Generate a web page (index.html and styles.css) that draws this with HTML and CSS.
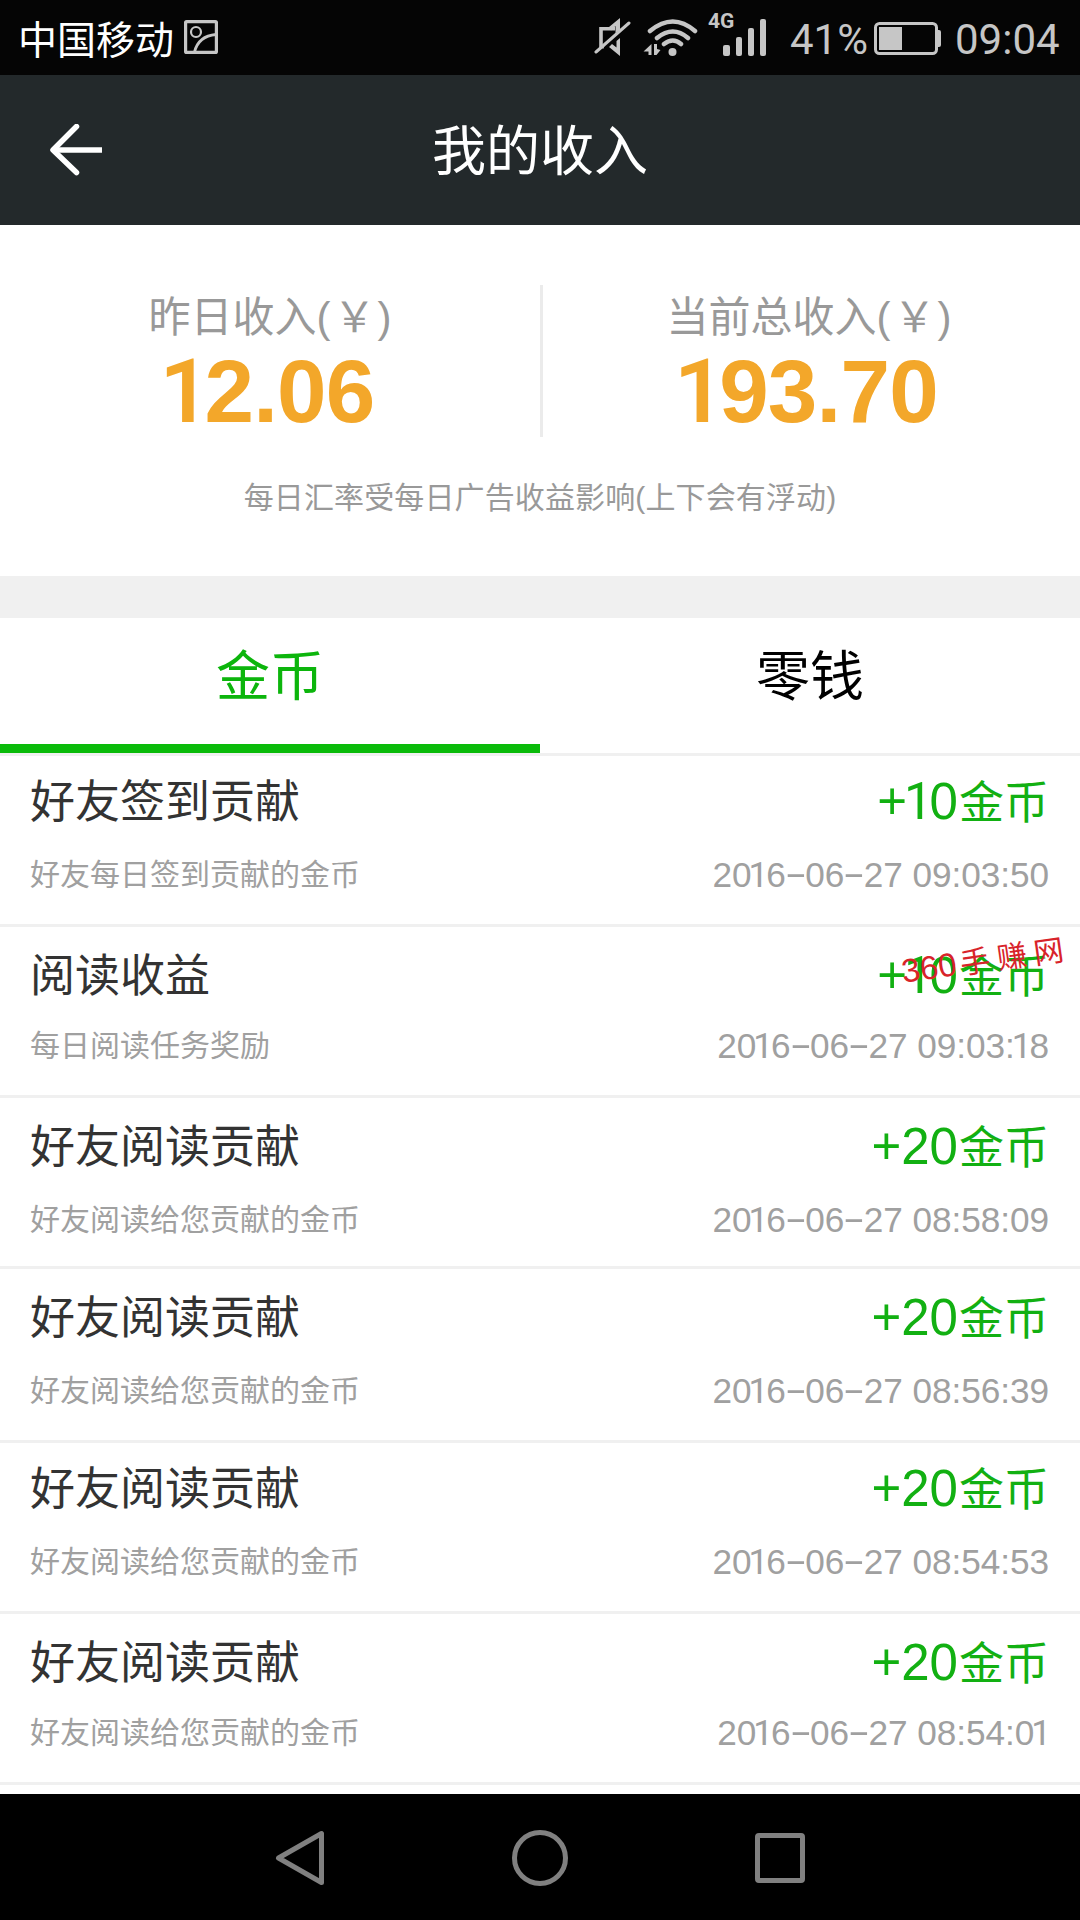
FILE: index.html
```html
<!DOCTYPE html>
<html lang="zh-CN">
<head>
<meta charset="utf-8">
<title>我的收入</title>
<link rel="stylesheet" href="styles.css">
</head>
<body>
<div class="screen">
  <div class="status">
    <span class="carrier">中国移动</span>
    <svg class="pic" width="34" height="34" viewBox="0 0 34 34" fill="none" stroke="#c6c6c6"><rect x="1.6" y="1.6" width="30.8" height="30.8" rx="1" stroke-width="3.2"/><circle cx="12" cy="12" r="5" stroke-width="2.2"/><path d="M10.500 32C13 22 20 15.500 32 14.500" stroke-width="2.8"/></svg>
    <svg class="mute" width="38" height="40" viewBox="0 0 38 40" fill="none" stroke="#c6c6c6"><path d="M22 10.800H8V28L11 29" stroke-width="3.600"/><path d="M16 9L27 0V12L22.500 15V8L18 12.500Z" fill="#c6c6c6" stroke="none"/><path d="M27 20V38L16 29L19 26L23.500 29.500V23Z" fill="#c6c6c6" stroke="none"/><path d="M3 34L36 5" stroke-width="3" stroke-linecap="round"/></svg>
    <svg class="wifi" width="56" height="38" viewBox="0 0 56 38" fill="none" stroke="#c6c6c6" stroke-width="4.500" stroke-linecap="round"><path d="M7 12Q30-7 52 12M14 19Q30 6 45 19M21 25Q30 18 38 25"/><g fill="#c6c6c6" stroke="none"><circle cx="29.500" cy="33" r="4"/><path d="M8.500 25V36H5.500V32.500H0.500ZM11 25V36H13.500L17.500 31L14 30V25Z"/></g></svg>
    <span class="net">4G</span>
    <svg class="bars" width="43" height="37" viewBox="0 0 43 37" fill="#c6c6c6"><rect y="26" width="7" height="11" rx="2"/><rect x="13" y="18" width="6" height="19" rx="2"/><rect x="25" y="9" width="6" height="28" rx="2"/><rect x="37" width="6" height="37" rx="2"/></svg>
    <span class="pct">41%</span>
    <svg class="batt" width="68" height="34" viewBox="0 0 68 34"><rect x="1.5" y="1.5" width="61" height="30" rx="4" fill="none" stroke="#c6c6c6" stroke-width="3"/><path d="M5 5H28V28H5ZM64 8H65Q67 8 67 10V23Q67 25 65 25H64Z" fill="#c6c6c6"/></svg>
    <span class="time">09:04</span>
  </div>
  <header class="header">
    <svg class="back" width="54" height="52" viewBox="0 0 54 52" fill="none" stroke="#fff" stroke-width="5.500"><path d="M4 26H53" /><path d="M27.500 2.500L4 26L27.500 48.500" stroke-linecap="round" stroke-linejoin="round"/></svg>
    <h1 class="title">我的收入</h1>
  </header>
  <section class="summary">
    <div class="totals">
      <div class="total"><div class="label">昨日收入(<span class="yen">￥</span>)</div><div class="value"><i>1</i>2.06</div></div>
      <div class="total"><div class="label">当前总收入(<span class="yen">￥</span>)</div><div class="value"><i>1</i>93.70</div></div>
    </div>
    <p class="note">每日汇率受每日广告收益影响(上下会有浮动)</p>
  </section>
  <nav class="tabs"><div class="tab active">金币</div><div class="tab">零钱</div></nav>
  <ul class="list">
    <li class="row"><div class="line main"><span class="name">好友签到贡献</span><span class="amount">+<i>1</i>0<b>金币</b></span></div><div class="line sub"><span class="desc">好友每日签到贡献的金币</span><span class="date">20<i>1</i>6<s>-</s>06<s>-</s>27 09:03:50</span></div></li>
    <li class="row"><div class="line main"><span class="name">阅读收益</span><span class="amount">+<i>1</i>0<b>金币</b></span></div><div class="line sub"><span class="desc">每日阅读任务奖励</span><span class="date">20<i>1</i>6<s>-</s>06<s>-</s>27 09:03:<i>1</i>8</span></div><span class="mark">360<em>手赚网</em></span></li>
    <li class="row"><div class="line main"><span class="name">好友阅读贡献</span><span class="amount">+20<b>金币</b></span></div><div class="line sub"><span class="desc">好友阅读给您贡献的金币</span><span class="date">20<i>1</i>6<s>-</s>06<s>-</s>27 08:58:09</span></div></li>
    <li class="row"><div class="line main"><span class="name">好友阅读贡献</span><span class="amount">+20<b>金币</b></span></div><div class="line sub"><span class="desc">好友阅读给您贡献的金币</span><span class="date">20<i>1</i>6<s>-</s>06<s>-</s>27 08:56:39</span></div></li>
    <li class="row"><div class="line main"><span class="name">好友阅读贡献</span><span class="amount">+20<b>金币</b></span></div><div class="line sub"><span class="desc">好友阅读给您贡献的金币</span><span class="date">20<i>1</i>6<s>-</s>06<s>-</s>27 08:54:53</span></div></li>
    <li class="row"><div class="line main"><span class="name">好友阅读贡献</span><span class="amount">+20<b>金币</b></span></div><div class="line sub"><span class="desc">好友阅读给您贡献的金币</span><span class="date">20<i>1</i>6<s>-</s>06<s>-</s>27 08:54:0<i>1</i></span></div></li>
  </ul>
  <div class="softkeys">
    <svg width="60" height="60" viewBox="0 0 60 60" fill="none" stroke="#808080" stroke-width="5" stroke-linejoin="round"><path d="M8.500 30L51.500 5.500V54.500Z"/></svg>
    <svg width="60" height="60" viewBox="0 0 60 60" fill="none" stroke="#808080" stroke-width="5"><circle cx="30" cy="30" r="25.500"/></svg>
    <svg width="60" height="60" viewBox="0 0 60 60" fill="none" stroke="#808080" stroke-width="5"><rect x="7.500" y="7.500" width="45" height="45" rx="1.500"/></svg>
  </div>
</div>
</body>
</html>
```
FILE: styles.css
```css
* { box-sizing: border-box; }
body { margin: 0; background: #fff; }
.screen {
  width: 1080px; height: 1920px; overflow: hidden;
  display: flex; flex-direction: column;
  font-family: "Liberation Sans", "Noto Sans CJK SC", sans-serif;
}
/* Footless numeral one */
i { font-family: Roboto, sans-serif; font-style: normal; }

.status {
  height: 75px; flex: none; background: #050505; color: #c6c6c6;
  display: flex; align-items: flex-start; padding-left: 18px;
  font-family: Roboto, "Noto Sans CJK SC", sans-serif; white-space: nowrap;
}
.status svg { flex: none; }
.carrier { width: 166px; color: #fff; font: 39px/75px "Noto Sans CJK SC", sans-serif; }
.pic { margin-top: 20px; }
.mute { margin: 18px 0 0 375px; }
.wifi { margin: 19px 0 0 12px; }
.net { width: 28px; margin: 11px -13px 0 9px; font: 700 21px/21px Roboto, sans-serif; }
.bars { margin: 19px 0 0 0; }
.pct { width: 84px; margin-left: 24px; font-size: 42px; line-height: 80px; }
.batt { margin: 22px 0 0 0; }
.time { margin-left: 13px; font-size: 42px; line-height: 80px; }

.header {
  height: 150px; flex: none; background: #23292b; color: #fff;
  display: grid; grid-template-columns: 200px 1fr 200px; align-items: center;
}
.back { margin-left: 49px; }
.title { margin: 0; padding-top: 4px; text-align: center; font-size: 54px; font-weight: 400; line-height: 80px; }

.summary { height: 351px; flex: none; padding-top: 60px; color: #999; }
.totals { display: flex; height: 152px; }
.total { width: 50%; padding-top: 3px; text-align: center; }
.total + .total { border-left: 3px solid #ebebeb; padding-right: 5px; }
.label { font-size: 42px; line-height: 60px; }
.yen { margin: 0 2px 0 3px; }
.value { color: #f3a72a; font-size: 89px; line-height: 86px; font-weight: 700; letter-spacing: -0.8px; }
.value i { font-weight: 600; margin: 0 -5px 0 -6px; }
.note { margin: 41px 0 0; text-align: center; font-size: 30px; line-height: 40px; letter-spacing: 0.12px; }

.tabs {
  height: 180px; flex: none; display: flex;
  border-top: 42px solid #f0f0f0; border-bottom: 3px solid #f0f0f0;
}
.tab { width: 50%; padding-top: 19px; text-align: center; font-size: 54px; line-height: 80px; color: #000; }
.tab.active { color: #0cb50c; border-bottom: 9px solid #0abb0a; }

.list { flex: 1; margin: 0; padding: 0; list-style: none; }
.row {
  --top: 23px; --gap: 25px;
  position: relative; height: 171px; padding: var(--top) 31px 0 30px;
  border-bottom: 3px solid #f0f0f0;
}
.row:nth-child(1) { --top: 20px; }
.row:nth-child(2) { --gap: 22px; }
.row:nth-child(4) { height: 174px; }
.row:nth-child(5) { --top: 20px; }
.row:nth-child(6) { --gap: 22px; }
.line { display: flex; justify-content: space-between; align-items: center; white-space: nowrap; }
.main { height: 54px; }
.sub { height: 40px; margin-top: var(--gap); color: #a0a0a0; }
.name { font-size: 45px; line-height: 54px; color: #333; }
.amount { font-size: 51px; line-height: 54px; color: #12b012; }
.amount i { margin: 0 -3px 0 -3px; }
.amount b { font-size: 45px; font-weight: 400; margin-left: 1px; }
.desc { font-size: 30px; line-height: 40px; }
.date { font-size: 35.2px; line-height: 40px; letter-spacing: -0.06px; }
.date i { margin: 0 -2px 0 -3px; }
.date s { display: inline-block; width: 19.5px; text-align: center; text-decoration: none; transform: translateY(-2px) scaleX(1.9); }
.mark {
  position: absolute; left: 901px; top: 13px;
  display: flex; align-items: center; color: #d8232a;
  font-size: 33px; line-height: 40px; transform: rotate(-8deg);
}
.mark em { font: 30px/36px "Noto Sans CJK SC", sans-serif; font-style: normal; letter-spacing: 7px; margin-left: 4px; padding-bottom: 4px; }

.softkeys {
  height: 126px; flex: none; padding: 2px 180px 0; background: #000;
  display: grid; grid-template-columns: repeat(3, 240px); place-items: center;
}
```
